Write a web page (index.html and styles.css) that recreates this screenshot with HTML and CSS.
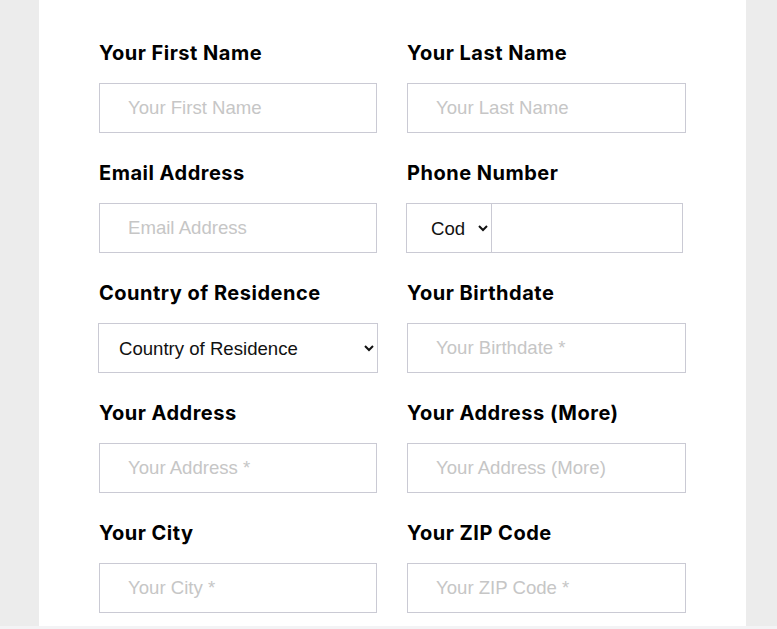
FILE: index.html
```html
<!DOCTYPE html>
<html lang="en">
<head>
    <meta charset="UTF-8">
    <meta name="viewport" content="width=device-width, initial-scale=1.0">
    <title>Registration Form</title>
    <link rel="stylesheet" href="styles.css">
</head>
<body>

    <div id="page">
        <form id="form">
            <div class="field">
                <label for="firstName">Your First Name</label>
                <input type="text" id="firstName" placeholder="Your First Name">
            </div>
            <div class="field">
                <label for="lastName">Your Last Name</label>
                <input type="text" id="lastName" placeholder="Your Last Name">
            </div>

            <div class="field">
                <label for="email">Email Address</label>
                <input type="email" id="email" placeholder="Email Address">
            </div>
            <div class="field">
                <label for="phone">Phone Number</label>
                <div class="phone">
                    <select id="code">
                        <option>Code</option>
                        <option>+1</option>
                        <option>+44</option>
                    </select>
                    <input type="tel" id="phone">
                </div>
            </div>

            <div class="field">
                <label for="country">Country of Residence</label>
                <select id="country" class="wide">
                    <option>Country of Residence</option>
                </select>
            </div>
            <div class="field">
                <label for="birthdate">Your Birthdate</label>
                <input type="text" id="birthdate" placeholder="Your Birthdate *">
            </div>

            <div class="field">
                <label for="address">Your Address</label>
                <input type="text" id="address" placeholder="Your Address *">
            </div>
            <div class="field">
                <label for="address2">Your Address (More)</label>
                <input type="text" id="address2" placeholder="Your Address (More)">
            </div>

            <div class="field">
                <label for="city">Your City</label>
                <input type="text" id="city" placeholder="Your City *">
            </div>
            <div class="field">
                <label for="zip">Your ZIP Code</label>
                <input type="text" id="zip" placeholder="Your ZIP Code *">
            </div>
        </form>
    </div>

    <div id="footer"></div>

</body>
</html>
```

FILE: styles.css
```css
body {
    font-family: 'Liberation Sans', Arial, sans-serif;
    margin: 0;
    background-color: #ececec;
    overflow: hidden;
}

#page {
    width: 707px;
    height: 626px;
    margin-left: 39px;
    background-color: #fff;
    box-sizing: border-box;
    padding: 38px 60px 0;
}

#form {
    display: grid;
    grid-template-columns: 278px 279px;
    column-gap: 30px;
    row-gap: 25px;
}

.field label {
    display: block;
    font-family: 'Inter', 'Noto Sans', sans-serif;
    font-weight: 700;
    font-size: 20px;
    line-height: 30px;
    letter-spacing: 0.5px;
    color: #000;
    margin-bottom: 15px;
}

input,
select {
    font-family: 'Liberation Sans', Arial, sans-serif;
    font-size: 18.6px;
    height: 50px;
    box-sizing: border-box;
    border: 1px solid #cacad4;
    border-radius: 0;
    background-color: #fff;
    outline: none;
}

input {
    width: 100%;
    padding: 0 28px;
    color: #333;
}

input::placeholder {
    color: #c6c6c6;
}

select {
    color: #111;
    padding: 0 8px 0 16px;
}

select.wide {
    width: 280px;
    margin-left: -1px;
}

.phone {
    display: flex;
    width: 277px;
    margin-left: -1px;
}

.phone select {
    width: 86px;
    flex: none;
    padding: 0 10px 0 20px;
}

.phone input {
    flex: 1;
    border-left: none;
    padding: 0 10px;
}

#footer {
    height: 3px;
    background-color: #f3f3f5;
}
```
